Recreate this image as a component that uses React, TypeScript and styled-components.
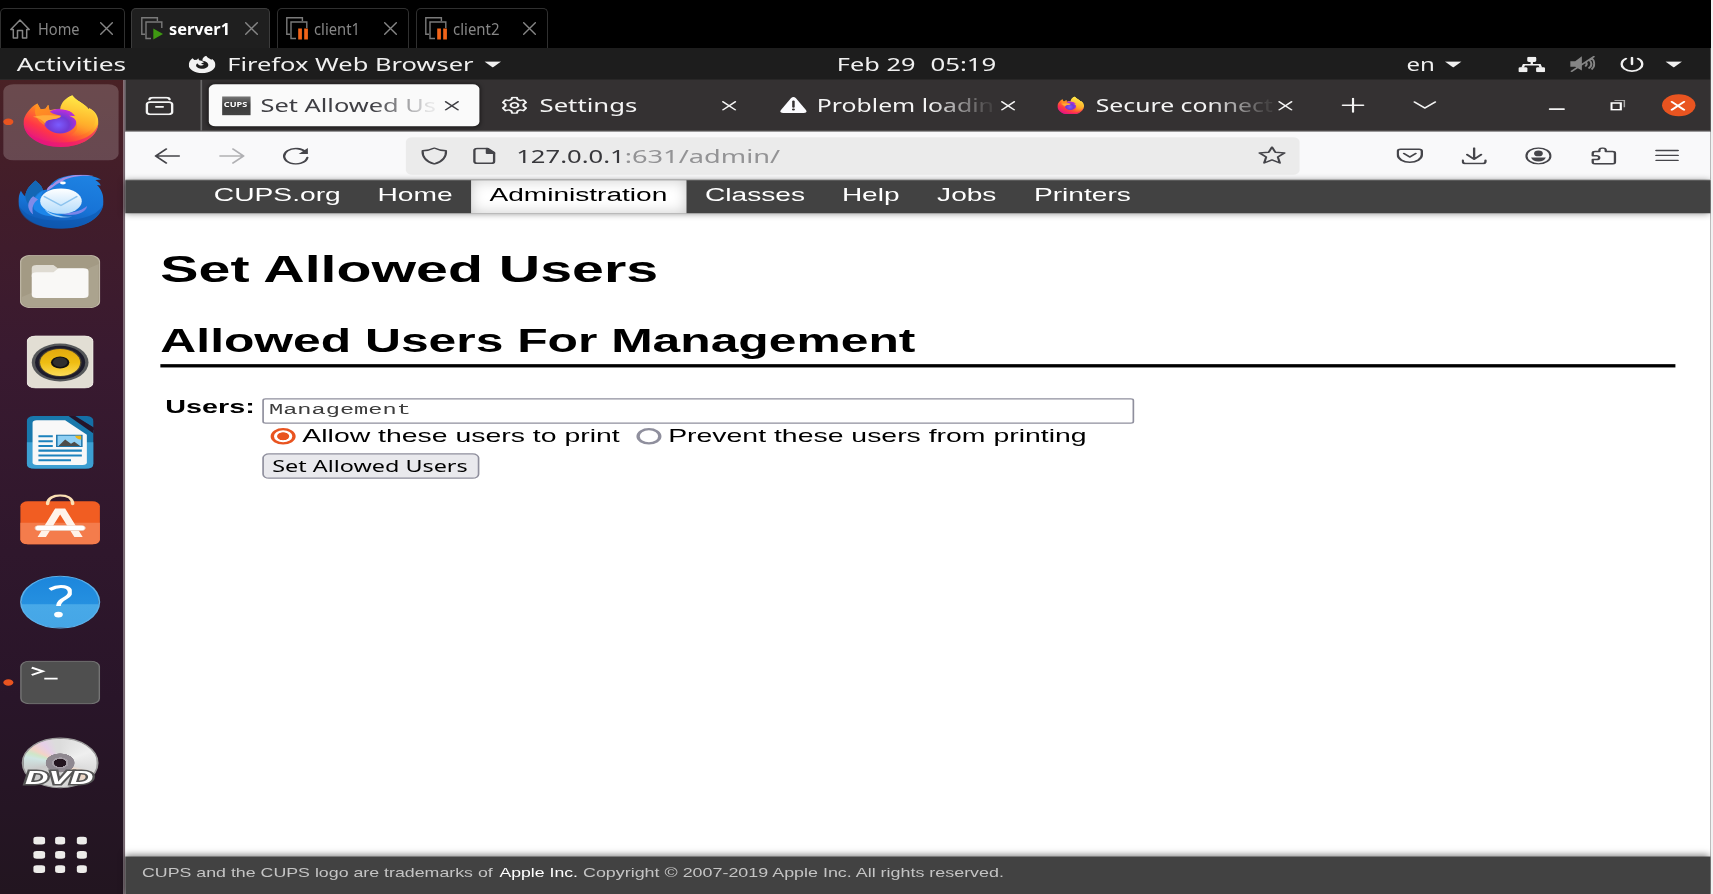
import React, { useLayoutEffect, useRef } from "react";
import styled, { createGlobalStyle } from "styled-components";

const GlobalStyle = createGlobalStyle`
  *, *::before, *::after { box-sizing: border-box; }
  html, body, #root { height: 100%; }
  body { margin: 0; background: #f1f1f1; overflow: hidden; }
  svg { display: block; flex: none; }
`;

const UI = `"Noto Sans", "Open Sans", sans-serif`;
const HELV = `"Liberation Sans", Arial, sans-serif`;

/* ---------- text fitted to a given advance width ---------- */

const FitOuter = styled.span<{ $w: number; $fade?: boolean }>`
  display: inline-block;
  flex: none;
  width: ${(p) => p.$w}px;
  white-space: nowrap;
  ${(p) => p.$fade && `mask-image: linear-gradient(to right, #000 64%, rgba(0, 0, 0, 0.1) 97%);`}
`;

const FitInner = styled.span`
  display: inline-block;
  transform-origin: 0 50%;
  white-space: pre;
`;

function Fit({ w, fade, children }: { w: number; fade?: boolean; children: React.ReactNode }) {
  const outer = useRef<HTMLSpanElement>(null);
  const inner = useRef<HTMLSpanElement>(null);
  useLayoutEffect(() => {
    if (!outer.current || !inner.current) return;
    inner.current.style.transform = "none";
    const k = outer.current.getBoundingClientRect().width / inner.current.getBoundingClientRect().width;
    inner.current.style.transform = `scaleX(${k})`;
  }, [w]);
  return (
    <FitOuter ref={outer} $w={w} $fade={fade}>
      <FitInner ref={inner}>{children}</FitInner>
    </FitOuter>
  );
}

/* ---------- host window with machine tabs ---------- */

const HostWindow = styled.div`
  width: 1711px;
  height: 894px;
  display: flex;
  flex-direction: column;
  overflow: hidden;
  background: #000;
`;

const MachineTabs = styled.div`
  height: 48px;
  flex: none;
  display: flex;
  align-items: flex-end;
  gap: 6.5px;
`;

const MachineTab = styled.div<{ $w: number; $active?: boolean; $gap?: number }>`
  width: ${(p) => p.$w}px;
  height: 40px;
  display: flex;
  align-items: center;
  padding: 0 11px 0 8.5px;
  gap: ${(p) => p.$gap ?? 4.5}px;
  border: 1px solid ${(p) => (p.$active ? "#3c3c3c" : "#303030")};
  border-bottom: 0;
  border-radius: 5px 5px 0 0;
  background: ${(p) => (p.$active ? "#1f1f1f" : "#000")};
  color: #868686;
  font: 400 15.5px/20px ${UI};
`;

const MachineName = styled.div<{ $active?: boolean }>`
  height: 20px;
  color: ${(p) => (p.$active ? "#fff" : "#868686")};
  font-weight: ${(p) => (p.$active ? 700 : 400)};
`;

const Push = styled.div`
  flex: 1;
`;

const GuestViewport = styled.div`
  flex: 1;
  overflow: hidden;
`;

const GuestScreen = styled.div`
  width: 1024px;
  height: 768px;
  transform: scale(1.6704, 1.10156);
  transform-origin: 0 0;
  display: flex;
  flex-direction: column;
  background: #fff;
`;

/* ---------- desktop shell ---------- */

const TopBar = styled.div`
  height: 29px;
  flex: none;
  display: grid;
  grid-template-columns: 501px 1fr auto;
  align-items: center;
  padding: 0 17px 0 0;
  background: #1d1d1d;
  color: #f0f0f0;
  font: 400 16px/22px ${UI};
`;

const TopLeft = styled.div`
  display: flex;
  align-items: center;
  padding-left: 10px;
`;

const AppMenu = styled.div`
  display: flex;
  align-items: center;
  gap: 7px;
  margin-left: 37px;
`;

const Clock = styled.div`
  display: flex;
  gap: 9px;
`;

const Status = styled.div`
  display: flex;
  align-items: center;
`;

const StatusItem = styled.div<{ $ml: number }>`
  margin-left: ${(p) => p.$ml}px;
  color: #f0f0f0;
`;

const Workspace = styled.div`
  flex: 1;
  display: flex;
  min-height: 0;
`;

const DockBar = styled.div`
  width: 75px;
  flex: none;
  display: flex;
  flex-direction: column;
  padding-top: 2px;
  border-right: 1px solid #76666f;
  background: linear-gradient(180deg, #492125 0%, #421d2a 14%, #391a30 34%, #2f172c 58%, #291529 76%, #221520 100%);
`;

const DockItem = styled.div`
  height: 72.75px;
  flex: none;
  display: flex;
  align-items: center;
`;

const DockTile = styled.div<{ $focused?: boolean }>`
  position: relative;
  width: 69px;
  height: 69px;
  margin-left: 1.5px;
  padding: 0 0 1.5px;
  border-radius: 6px;
  display: flex;
  align-items: center;
  justify-content: center;
  background: ${(p) => (p.$focused ? "rgba(255, 255, 255, 0.19)" : "transparent")};
`;

const RunningDot = styled.span`
  position: absolute;
  left: 0;
  top: 31px;
  width: 6px;
  height: 6px;
  border-radius: 50%;
  background: #e95420;
`;

const AppsButton = styled.div`
  display: grid;
  grid-template-columns: repeat(3, 6.5px);
  grid-auto-rows: 6.5px;
  gap: 6.4px;
  margin: 30.5px 0 0 20px;
`;

const AppsDot = styled.span`
  border-radius: 2px;
  background: #edecea;
`;

/* ---------- browser chrome ---------- */

const Browser = styled.div`
  flex: 1;
  min-width: 0;
  display: flex;
  flex-direction: column;
`;

const TabStrip = styled.div`
  height: 47px;
  flex: none;
  display: flex;
  align-items: center;
  background: #343132;
  border-bottom: 1px solid #777576;
  color: #f4f4f4;
`;

const ViewButton = styled.div`
  width: 45.5px;
  height: 46px;
  padding-left: 12px;
  display: flex;
  align-items: center;
  border-right: 1px solid #6b696a;
`;

const TabList = styled.div`
  display: flex;
  gap: 4px;
  margin-left: 4px;
`;

const BrowserTab = styled.div<{ $active?: boolean }>`
  width: 162.5px;
  height: 38px;
  padding: 0 12.5px 0 ${(p) => (p.$active ? 8 : 9)}px;
  display: flex;
  align-items: center;
  border-radius: 4px;
  background: ${(p) => (p.$active ? "#fafafa" : "transparent")};
  box-shadow: ${(p) => (p.$active ? "0 0 3px rgba(0, 0, 0, 0.6)" : "none")};
  color: ${(p) => (p.$active ? "#3f3f44" : "#f4f4f4")};
  font: 400 16px/24px ${UI};
`;

const TabLabel = styled.div`
  flex: 1;
  margin-left: 6.7px;
  height: 24px;
`;

const Favicon = styled.div`
  width: 17px;
  height: 17px;
  display: flex;
  align-items: center;
  justify-content: center;
  background: linear-gradient(#777 0%, #3c3c3c 45%, #444 100%);
  color: #fff;
  font: 700 6px/8px ${UI};
`;

const StripTools = styled.div`
  flex: 1;
  display: flex;
  align-items: center;
  padding-left: 16px;
`;

const StripTool = styled.div<{ $ml: number }>`
  margin-left: ${(p) => p.$ml}px;
`;

const CloseCircle = styled.div`
  width: 20px;
  height: 20px;
  border-radius: 50%;
  display: flex;
  align-items: center;
  justify-content: center;
  background: #e95420;
  color: #fff;
`;

const NavBar = styled.div`
  height: 44px;
  flex: none;
  display: flex;
  align-items: center;
  padding: 0 18px 0 17px;
  background: #f9f9fa;
  border-bottom: 1px solid #cccccc;
  color: #45454a;
`;

const NavButtons = styled.div`
  display: flex;
  gap: 22.6px;
`;

const Dimmed = styled.div`
  opacity: 0.4;
`;

const UrlBar = styled.div`
  width: 535px;
  height: 34px;
  margin-left: 58px;
  padding: 0 8.5px 0 9px;
  display: flex;
  align-items: center;
  border-radius: 4px;
  background: #ebebeb;
`;

const PageInfo = styled.div`
  margin-left: 14.7px;
`;

const UrlText = styled.div`
  flex: 1;
  margin-left: 12px;
  display: flex;
  color: #38383c;
  font: 400 16.5px/24px ${UI};
`;

const UrlPath = styled.span`
  color: #939395;
`;

const NavTools = styled.div`
  flex: 1;
  display: flex;
  justify-content: flex-end;
  gap: 22.5px;
`;

/* ---------- CUPS page ---------- */

const Page = styled.div`
  flex: 1;
  display: flex;
  flex-direction: column;
  background: #fff;
  font-family: ${HELV};
  color: #000;
`;

const PageNav = styled.nav`
  height: 30px;
  flex: none;
  display: flex;
  padding-left: 41.8px;
  background: #424242;
  box-shadow: 0 1px 5px rgba(0, 0, 0, 0.5);
`;

const PageNavItem = styled.div<{ $active?: boolean }>`
  height: 30px;
  padding: 0 11.1px;
  font-size: 16px;
  line-height: 28px;
  color: ${(p) => (p.$active ? "#000" : "#fff")};
  background: ${(p) => (p.$active ? "#fff" : "transparent")};
  box-shadow: ${(p) => (p.$active ? "inset 0 0 10px rgba(0, 0, 0, 0.22)" : "none")};
`;

const Content = styled.main`
  flex: 1;
  padding: 31px 21px 0;
`;

const Title = styled.h1`
  margin: 0;
  font-size: 34px;
  line-height: 39px;
`;

const SectionTitle = styled.h2`
  margin: 28.5px 0 28.5px;
  padding: 0 0 4px;
  font-size: 30px;
  line-height: 34px;
  border-bottom: 3px solid #000;
`;

const Form = styled.div`
  display: flex;
  padding-left: 3px;
  font-size: 16px;
`;

const FieldLabel = styled.div`
  width: 58px;
  font-weight: 700;
  line-height: 16px;
`;

const Fields = styled.div`
  display: flex;
  flex-direction: column;
  align-items: flex-start;
`;

const TextField = styled.div`
  width: 522px;
  height: 23px;
  padding-left: 3px;
  border: 1px solid #8f8f9d;
  border-radius: 2px;
  color: #3d3d3d;
  font: 400 14px/18px "Liberation Mono", monospace;
`;

const RadioRow = styled.div`
  height: 18px;
  margin: 3px 0 6px 5px;
  display: flex;
  align-items: center;
`;

const RadioMark = styled.span<{ $checked?: boolean; $ml?: number }>`
  width: 15px;
  height: 15px;
  margin: 0 3.5px 1.5px ${(p) => p.$ml ?? 0}px;
  border-radius: 50%;
  border: 2px solid ${(p) => (p.$checked ? "#e95420" : "#8f8f9d")};
  background: ${(p) => (p.$checked ? "radial-gradient(circle, #e95420 0 3.3px, #fff 3.9px)" : "#fff")};
`;

const SubmitButton = styled.div`
  width: 130px;
  height: 23px;
  padding-left: 5px;
  border: 1px solid #8f8f9d;
  border-radius: 4px;
  background: #e9e9ed;
  font: 400 14.5px/21px ${UI};
`;

const Footer = styled.footer`
  height: 34px;
  flex: none;
  padding-left: 10px;
  display: flex;
  gap: 3.5px;
  background: #424242;
  box-shadow: 0 -1px 5px rgba(0, 0, 0, 0.5);
  color: #c4c4c4;
  font-size: 11px;
  line-height: 31px;
`;

const FooterLink = styled.span`
  color: #fff;
`;

/* ---------- line icons ---------- */

const Line = ({
  d,
  s = 16,
  sw = 1.3,
  h,
  children,
}: {
  d?: string;
  s?: number;
  sw?: number;
  h?: number;
  children?: React.ReactNode;
}) => (
  <svg
    width={s}
    height={h ?? s}
    viewBox={`0 0 ${s} ${h ?? s}`}
    fill="none"
    stroke="currentColor"
    strokeWidth={sw}
    strokeLinecap="round"
    strokeLinejoin="round"
  >
    {d && <path d={d} />}
    {children}
  </svg>
);

const HostClose = () => <Line s={13} sw={1.4} d="M.7.7 12.3 12.3M12.3.7.7 12.3" />;
const CloseX = () => <Line s={9} sw={1.15} d="M.8.8 8.2 8.2M8.2.8.8 8.2" />;
const Caret = () => (
  <svg width="10" height="6" viewBox="0 0 10 6">
    <path d="M0 .3h10L5 5.8z" fill="#f0f0f0" />
  </svg>
);

const MachineIcon = ({ running }: { running?: boolean }) => (
  <svg width="23" height="23" viewBox="0 0 23 23" fill="none" stroke="#7a7a7a" strokeWidth="1.4">
    <path d="M4 17.300H.8V.8h15.600V4" />
    <path d="M10 21.500H5V5h15.800v6" />
    {running ? (
      <path d="M12.300 11.500v11l9.700-5.500z" fill="#3f9a12" stroke="none" />
    ) : (
      <path d="M12.200 11.500h3.700v11h-3.700zM18.200 11.500h3.700v11h-3.700z" fill="#f26419" stroke="none" />
    )}
  </svg>
);

const FirefoxGlyph = () => (
  <svg width="16" height="16" viewBox="0 0 16 16">
    <path
      d="M2.200 2.200 3.400 4l1.500-.3.800-1.400.5 1.900 2 .5C8 2.500 9 .8 10.500.1c.4 1.700 1.900 2.300 3 3.600l.5-.8c1.300 1.500 2 3.500 2 5.400C16 12.600 12.400 16 8 16S0 12.600 0 8.500C0 6 .8 3.700 2.200 2.200z"
      fill="#f2f2f2"
    />
    <path
      d="M7.600 4.500c1.900 0 3.900 1.200 4.100 3.600.2 2-1.500 3.700-3.600 3.700-2 0-3.700-1.300-3.700-3 0-.8.300-1.400.8-1.900.1 1 .8 1.500 1.500 1.900 1 .2 2-.2 2.300-.9-.9-.2-1.500-.6-1.500-1.100.8-.1 1.400-.4 1.600-1-.5-.6-1-.9-1.500-1.300z"
      fill="#1d1d1d"
    />
  </svg>
);

const Firefox = ({ size, id }: { size: number; id: string }) => (
  <svg width={size} height={size * 1.04} viewBox="0 0 46 48">
    <defs>
      <linearGradient id={id + "a"} x1="0.85" y1="0.1" x2="0.25" y2="0.95">
        <stop offset="0" stopColor="#fff44f" />
        <stop offset="0.3" stopColor="#ffc02e" />
        <stop offset="0.52" stopColor="#ff7a27" />
        <stop offset="0.76" stopColor="#ff3647" />
        <stop offset="1" stopColor="#e31587" />
      </linearGradient>
      <radialGradient id={id + "b"} cx="0.45" cy="0.65" r="0.6">
        <stop offset="0" stopColor="#7a5cff" />
        <stop offset="0.55" stopColor="#7139d4" />
        <stop offset="1" stopColor="#b82fd9" />
      </radialGradient>
      <linearGradient id={id + "c"} x1="0.6" y1="0" x2="0.4" y2="1">
        <stop offset="0" stopColor="#fff04a" />
        <stop offset="0.6" stopColor="#ffb42c" />
        <stop offset="1" stopColor="#ff8b2a" stopOpacity="0" />
      </linearGradient>
      <linearGradient id={id + "d"} x1="0" y1="0" x2="0.6" y2="1">
        <stop offset="0" stopColor="#ff981e" />
        <stop offset="1" stopColor="#ff7a2b" />
      </linearGradient>
    </defs>
    <path
      d="M8.500 7.500l2 5.500 3-.600 1.700-3.600.8 5C19 12.800 23 12.500 24.500 13 24 7 26.500 2 30 0c1.500 4.500 8 8 10 13l.5-1C44 14.500 46 19.500 46 25c0 13-10 23-23 23S0 38.500 0 25C0 19 4 11 8.500 7.500z"
      fill={`url(#${id}a)`}
    />
    <path d="M0 25c1 11 10 19 23 19s22-8 23-19c0 13-10 23-23 23S0 38 0 25z" fill="#e8157a" opacity="0.6" />
    <ellipse cx="22.500" cy="24" rx="10" ry="11.500" fill={`url(#${id}b)`} />
    <path
      d="M22.500 13C23 6 26.500 2 30 0c1.500 4.500 8 8 10 13l.5-1C44 15 45 20 44 25c-2 9-8 14-18 14 6-3 8-8 6.500-14-.5-3-2-4.500-4.500-6l5 .5c-2-4-6-6-10.500-6.500z"
      fill={`url(#${id}c)`}
    />
    <path
      d="M8.500 7.500l2 5.500 3-.600 1.700-3.600.8 6.200c2 2.500 4.500 3.200 7 3.700-1 3-5 3.500-7.500 4-2 .5-3 1.500-2.500 5C10 25 4.500 18 8.500 7.500z"
      fill={`url(#${id}d)`}
    />
    <path d="M5.800 20c4-2 12-1.800 17.200-.5-1 2.500-5 2.500-7.500 3.500-1.500.6-2.200 2-2.200 3.500-1.300-3.500-4-5.500-7.500-6.500z" fill="#ffab3a" />
  </svg>
);

const Thunderbird = () => (
  <svg width="51" height="49" viewBox="0 0 52 50">
    <defs>
      <linearGradient id="tbBody" x1="0.7" y1="0" x2="0.4" y2="1">
        <stop offset="0" stopColor="#1e82e2" />
        <stop offset="0.6" stopColor="#1773d6" />
        <stop offset="1" stopColor="#0f56b0" />
      </linearGradient>
      <linearGradient id="tbMail" x1="0" y1="0" x2="0" y2="1">
        <stop offset="0" stopColor="#fff" />
        <stop offset="1" stopColor="#b4dcfb" />
      </linearGradient>
    </defs>
    <path
      d="M1.500 15c1 2.500 1.500 4 2.700 5C4.500 14 7.500 9 10.500 5.500c2 3 4 5 4.500 9l3-1C20 5 27 0 38 0c5 0 9 1.500 12.500 4.500l-3.500.5c1.500 1.500 2.800 3 3.300 5l-2.300-.5C51 14 52 19 52 25c0 14-11 25-26 25S0 39 0 25c0-4 .5-7 1.500-10z"
      fill="url(#tbBody)"
    />
    <path d="M4.200 20C4.500 14 7.500 9 10.500 5.500c2 3 4 5 4.500 9C10 18 8 24 9 32c-3-3-4.500-8-4.800-12z" fill="#1467b5" />
    <path d="M17.500 15c-.3-3 1-4.500 3.500-6 3-5 8.500-8.500 17-9 3 0 6 .3 8 1.200-9-1-17 1.300-20 6-3 1-5 5-8.500 7.800z" fill="#a68fe4" />
    <path d="M15 15c-4 12 4 22 13 22-5 3-14 2-18.500-5-1.500-7 1-13 5.500-17z" fill="#1c86ea" />
    <path d="M9 20c-4 5-4 12 0 17-1-6 0-11 3-14z" fill="#7f8be8" />
    <path d="M42 29c-4 5-10 7-17 7 7 3 16 1 17-7z" fill="#7a85e8" />
    <path d="M16 32c4 5 9 7 17 7-7 2-14 0-17-7z" fill="#9fd0f8" />
    <ellipse cx="26" cy="24.500" rx="12.700" ry="11.800" fill="url(#tbMail)" />
    <path d="M15.500 20 26 28.500 36 20" fill="none" stroke="#8cc3ee" strokeWidth="1.200" />
    <ellipse cx="27.200" cy="7.700" rx="1.800" ry="1.300" fill="#fff" />
    <path d="M0 28c4 11 14 14.500 26 14.500S49 38 52 27c-1 13-12 23-26 23S1 42 0 28z" fill="#0d57ad" opacity="0.6" />
  </svg>
);

const Files = () => (
  <svg width="48" height="48" viewBox="0 0 48 48">
    <rect x="0.300" y="0.300" width="47.400" height="47.400" rx="6" fill="#a39a84" stroke="#c2bba9" strokeWidth="0.800" />
    <path d="M1 38 47 8v33q0 6-6 6H7q-6 0-6-6z" fill="#b3ab98" opacity="0.500" />
    <path d="M7 20V12q0-3 3-3h10l3 3.500h15v8z" fill="#dfdbd2" />
    <path d="M7 18q0-2.500 3-2.500h10l3-3.500h15q3 0 3 3v21q0 3-3 3H10q-3 0-3-3z" fill="#f9f8f6" />
  </svg>
);

const Rhythmbox = () => (
  <svg width="40" height="48" viewBox="0 0 40 48">
    <defs>
      <linearGradient id="rbCone" x1="0" y1="0" x2="0" y2="1">
        <stop offset="0" stopColor="#e2a90e" />
        <stop offset="0.500" stopColor="#efbd12" />
        <stop offset="1" stopColor="#fbdc58" />
      </linearGradient>
    </defs>
    <rect x="0.300" y="0.300" width="39.400" height="47.400" rx="5" fill="#e2ded4" stroke="#f2efe8" strokeWidth="0.600" />
    <ellipse cx="20" cy="24.500" rx="17" ry="17.200" fill="#56585a" />
    <ellipse cx="20" cy="24.500" rx="15" ry="15.300" fill="#1d1c2b" />
    <ellipse cx="20" cy="24.500" rx="12.800" ry="13" fill="#4e4530" />
    <ellipse cx="20" cy="24.500" rx="12" ry="12.300" fill="url(#rbCone)" />
    <ellipse cx="20" cy="24.500" rx="5.500" ry="5.500" fill="#111" />
    <ellipse cx="20" cy="24.300" rx="4.300" ry="4.300" fill="#2f2f2f" />
  </svg>
);

const Writer = () => (
  <svg width="40" height="48" viewBox="0 0 40 48">
    <path d="M5 0h22.500L40 13v30q0 5-5 5H5q-5 0-5-5V5q0-5 5-5z" fill="#1878ac" />
    <path d="M0 24h40v19q0 5-5 5H5q-5 0-5-5z" fill="#3d9fd2" />
    <path d="M6 4h17l13 13v25q0 2.500-2.500 2.500H6q-2.500 0-2.500-2.500V6.500Q3.500 4 6 4z" fill="#f8f8f8" />
    <path d="M29 0h6q5 0 5 5v5.500z" fill="#146fa6" />
    <path d="M25 0h3.500L40 10.500V16z" fill="#24152a" />
    <path d="M7 18.500h8.600M7 23h8.600M7 27.300h8.600M7 31.500h26M7 36h26M7 40.300h19.500" stroke="#1c82bd" strokeWidth="1.900" />
    <path d="M18 17.500h15v10.300H18z" fill="#8fd0f4" stroke="#1c75ac" strokeWidth="0.900" />
    <path d="M19 27.300l4-6 3.500 4 2-1.800 3.500 3.800z" fill="#4d4c4a" />
    <path d="M29 18h3.600v3.500c-2 0-3.300-1.300-3.600-3.500z" fill="#edb512" />
  </svg>
);

const SoftwareCenter = () => (
  <svg width="48" height="51" viewBox="0 0 48 51">
    <rect x="0.200" y="6.500" width="47.600" height="39" rx="4.500" fill="#f15d22" />
    <path d="M.2 26h47.600v15q0 4.500-4.500 4.500H4.700Q.2 45.500.2 41z" fill="#f47c4c" />
    <path d="M16.500 9c0-6 4-7.800 7.500-7.800s7.500 1.800 7.500 7.800" fill="none" stroke="#fbe0b4" strokeWidth="2.100" strokeLinecap="round" />
    <path d="M21 13h6l10.500 26h-5L24 18.500 15.500 39h-5z" fill="#fff3ea" />
    <rect x="9" y="28.500" width="30" height="4.600" rx="2.300" fill="#fff" stroke="#e9c9b8" strokeWidth="0.600" />
  </svg>
);

const HelpDisc = styled.div`
  width: 48px;
  height: 48px;
  border-radius: 50%;
  border: 1px solid #5ab0ea;
  background: linear-gradient(#1c86dc 0%, #2590e0 54%, #48a9e8 55%, #45a6e6 100%);
  display: flex;
  align-items: center;
  justify-content: center;
`;

const HelpIcon = () => (
  <HelpDisc>
    <svg width="14" height="32" viewBox="0 0 14 32" fill="none">
      <path d="M.8 4.500C7.500-.5 13 2.200 13 7.200c0 5.500-7 5.500-7 12.300" stroke="#fff" strokeWidth="2.800" />
      <ellipse cx="6" cy="27.300" rx="2.600" ry="2.600" fill="#fff" />
    </svg>
  </HelpDisc>
);

const Terminal = () => (
  <svg width="48" height="40" viewBox="0 0 48 40">
    <rect x="0.500" y="0.800" width="47" height="38.400" rx="5" fill="#4f4f4f" stroke="#747474" strokeWidth="0.900" />
    <path d="M7 6.500 13.500 9.800 7 13.200" stroke="#fff" strokeWidth="1.700" fill="none" />
    <path d="M14.500 16.500h8" stroke="#fff" strokeWidth="1.600" />
  </svg>
);

const Disc = styled.div`
  position: relative;
  width: 46px;
  height: 46px;
  border-radius: 50%;
  border: 1px solid #9c9c9c;
  background:
    radial-gradient(circle, #24151f 0 3.600px, #a39ca4 3.800px 5px, #8f8890 5px 8.500px, transparent 8.800px),
    conic-gradient(#dcdcdc 0deg, #efefef 60deg, #dcdcdc 110deg, #f4d9c4 125deg, #dadada 160deg, #c9c9c9 250deg, #d0e6e4 285deg, #cfe6c8 297deg, #f3d3c6 308deg, #e6cfe8 330deg, #dcdcdc 350deg);
`;

const DiscLabel = styled.div`
  position: absolute;
  left: 1px;
  top: 27px;
  font: italic 700 16px/18px ${HELV};
  color: #fff;
  -webkit-text-stroke: 2.500px #555;
  paint-order: stroke fill;
`;

const Dvd = () => (
  <Disc>
    <DiscLabel>
      <Fit w={41}>DVD</Fit>
    </DiscLabel>
  </Disc>
);

/* ---------- data ---------- */

const dockApps: { icon: React.ReactNode; focused?: boolean; running?: boolean }[] = [
  { icon: <Firefox size={45} id="fxDock" />, focused: true, running: true },
  { icon: <Thunderbird /> },
  { icon: <Files /> },
  { icon: <Rhythmbox /> },
  { icon: <Writer /> },
  { icon: <SoftwareCenter /> },
  { icon: <HelpIcon /> },
  { icon: <Terminal />, running: true },
  { icon: <Dvd /> },
];

const navItems: [string, number, boolean?][] = [
  ["CUPS.org", 76],
  ["Home", 45],
  ["Administration", 106.5, true],
  ["Classes", 60],
  ["Help", 34.5],
  ["Jobs", 35.5],
  ["Printers", 58],
];

const Gear = () => (
  <Line s={16} sw={1.3}>
    <path d="M6.600.9h2.800l.5 2 1.500.9 2-.7 1.500 2.400-1.500 1.600v1.800l1.500 1.600-1.500 2.400-2-.7-1.500.9-.5 2H6.600l-.5-2-1.500-.9-2 .7-1.500-2.400 1.500-1.600V7.100L1.100 5.500l1.500-2.400 2 .7 1.500-.9z" />
    <circle cx="8" cy="8" r="2.300" />
  </Line>
);

const Warning = () => (
  <svg width="16" height="16" viewBox="0 0 16 16">
    <path d="M6.600 1.400q1.400-1.900 2.800 0l6.200 11q.9 2.300-1.300 2.600H1.700q-2.200-.3-1.300-2.600z" fill="#fbfbfe" />
    <path d="M8 4.500v5" stroke="#343132" strokeWidth="1.500" strokeLinecap="round" />
    <circle cx="8" cy="11.900" r="0.900" fill="#343132" />
  </svg>
);

export default function App() {
  return (
    <>
      <GlobalStyle />
      <HostWindow>
        <MachineTabs>
          <MachineTab $w={124.5} $gap={8.5}>
            <Line s={20} sw={1.5} d="M.8 10.500 10 1l9.200 9.500h-2.500V19h-4.200v-7.500h-5V19H3.300v-8.500z" />
            <MachineName>
              <Fit w={41.5}>Home</Fit>
            </MachineName>
            <Push />
            <HostClose />
          </MachineTab>
          <MachineTab $w={139} $active $gap={5}>
            <MachineIcon running />
            <MachineName $active>
              <Fit w={61}>server1</Fit>
            </MachineName>
            <Push />
            <HostClose />
          </MachineTab>
          <MachineTab $w={132.5}>
            <MachineIcon />
            <MachineName>
              <Fit w={46}>client1</Fit>
            </MachineName>
            <Push />
            <HostClose />
          </MachineTab>
          <MachineTab $w={132.5}>
            <MachineIcon />
            <MachineName>
              <Fit w={46.5}>client2</Fit>
            </MachineName>
            <Push />
            <HostClose />
          </MachineTab>
        </MachineTabs>
        <GuestViewport>
          <GuestScreen>
            <TopBar>
              <TopLeft>
                <Fit w={65.5}>Activities</Fit>
                <AppMenu>
                  <FirefoxGlyph />
                  <Fit w={147.5}>Firefox Web Browser</Fit>
                  <Caret />
                </AppMenu>
              </TopLeft>
              <Clock>
                <Fit w={47}>Feb 29</Fit>
                <Fit w={39.5}>05:19</Fit>
              </Clock>
              <Status>
                <Fit w={17}>en</Fit>
                <StatusItem $ml={6}>
                  <Caret />
                </StatusItem>
                <StatusItem $ml={34}>
                  <svg width="16" height="14" viewBox="0 0 16 14" fill="#f0f0f0">
                    <rect x="5.300" y="0" width="5.400" height="4.600" rx="1" />
                    <rect x="0" y="9.500" width="5.400" height="4.500" rx="1" />
                    <rect x="10.600" y="9.500" width="5.400" height="4.500" rx="1" />
                    <path d="M7.300 4h1.400v2.600h4.600l1 3.400h-1.600l-.6-2H3.900l-.6 2H1.700l1-3.400h4.600z" />
                  </svg>
                </StatusItem>
                <StatusItem $ml={15}>
                  <svg width="15" height="15" viewBox="0 0 15 15" fill="none" stroke="#858585" strokeWidth="1.300">
                    <path d="M0 5h3l4-4.500v13L3 10H0z" fill="#858585" stroke="none" />
                    <path d="M9 5.500c1.200 1.200 1.200 3 0 4.200M11 3.500c2.300 2.300 2.300 6 0 8.200M12.800 2c2.300 3 2.200 7.800 0 10.500M.5 14.500 14.500.5" />
                  </svg>
                </StatusItem>
                <StatusItem $ml={15}>
                  <Line s={14} sw={1.500} d="M3.400 1.700a6.200 6.200 0 1 0 7.200 0M7 .8v6" />
                </StatusItem>
                <StatusItem $ml={13}>
                  <Caret />
                </StatusItem>
              </Status>
            </TopBar>
            <Workspace>
              <DockBar>
                {dockApps.map((app, i) => (
                  <DockItem key={i}>
                    <DockTile $focused={app.focused}>
                      {app.icon}
                      {app.running && <RunningDot />}
                    </DockTile>
                  </DockItem>
                ))}
                <AppsButton>
                  {Array.from({ length: 9 }, (_, i) => (
                    <AppsDot key={i} />
                  ))}
                </AppsButton>
              </DockBar>
              <Browser>
                <TabStrip>
                  <ViewButton>
                    <Line s={17} sw={1.500}>
                      <rect x="0.900" y="5.200" width="15.200" height="11" rx="2" />
                      <path d="M2.500 2.600Q2.800 1 4.500 1h8q1.700 0 2 1.600M6.500 9.500h4" />
                    </Line>
                  </ViewButton>
                  <TabList>
                    <BrowserTab $active>
                      <Favicon>
                        <Fit w={14}>CUPS</Fit>
                      </Favicon>
                      <TabLabel>
                        <Fit w={105} fade>
                          Set Allowed Us
                        </Fit>
                      </TabLabel>
                      <CloseX />
                    </BrowserTab>
                    <BrowserTab>
                      <Gear />
                      <TabLabel>
                        <Fit w={58.5}>Settings</Fit>
                      </TabLabel>
                      <CloseX />
                    </BrowserTab>
                    <BrowserTab>
                      <Warning />
                      <TabLabel>
                        <Fit w={106} fade>
                          Problem loadin
                        </Fit>
                      </TabLabel>
                      <CloseX />
                    </BrowserTab>
                    <BrowserTab>
                      <Firefox size={16} id="fxTab" />
                      <TabLabel>
                        <Fit w={106} fade>
                          Secure connect
                        </Fit>
                      </TabLabel>
                      <CloseX />
                    </BrowserTab>
                  </TabList>
                  <StripTools>
                    <Line s={14} sw={1.300} d="M7 .8v12.400M.8 7h12.400" />
                    <StripTool $ml={29}>
                      <Line s={14} h={10} sw={1.300} d="M.8 2 7 7.500 13.200 2" />
                    </StripTool>
                    <StripTool $ml={67}>
                      <Line s={10} h={9} sw={1.400} d="M.8 7.500h8.400" />
                    </StripTool>
                    <StripTool $ml={27}>
                      <svg width="9" height="10" viewBox="0 0 9 10" fill="none">
                        <path d="M2.500.7h6v6" stroke="#a9a8a8" strokeWidth="1" />
                        <path d="M.7 3h5.600v6H.7z" stroke="#fff" strokeWidth="1.300" />
                      </svg>
                    </StripTool>
                    <StripTool $ml={22}>
                      <CloseCircle>
                        <Line s={9} sw={1.500} d="M.8.8 8.200 8.200M8.200.8.8 8.200" />
                      </CloseCircle>
                    </StripTool>
                  </StripTools>
                </TabStrip>
                <NavBar>
                  <NavButtons>
                    <Line d="M15.200 8H1.200M7.500 1.700 1.200 8l6.300 6.300" />
                    <Dimmed>
                      <Line d="M.8 8h14M8.500 1.700 14.800 8l-6.300 6.300" />
                    </Dimmed>
                    <Line sw={1.400}>
                      <path d="M14.300 5A7 7 0 1 0 15 9.500" />
                      <path d="M15.300.8v5.400H9.800z" fill="currentColor" stroke="none" />
                    </Line>
                  </NavButtons>
                  <UrlBar>
                    <Line d="M8 .8c2 1.600 4.500 2.300 7 2.400C15.300 9 13 13 8 15.300 3 13 .7 9 1 3.200 3.500 3.100 6 2.400 8 .8z" />
                    <PageInfo>
                      <Line s={14} h={16} sw={1.400}>
                        <path d="M2.700 1.200H9l3.800 3.800v8q0 1.700-1.700 1.700H2.700Q1 14.700 1 13V2.900q0-1.700 1.700-1.700z" />
                        <path d="M8.500 1.200v4.300h4.300z" fill="currentColor" />
                      </Line>
                    </PageInfo>
                    <UrlText>
                      <Fit w={65}>127.0.0.1</Fit>
                      <UrlPath>
                        <Fit w={93}>:631/admin/</Fit>
                      </UrlPath>
                    </UrlText>
                    <Line s={17} sw={1.300} d="M8.500 1l2 4.700 5.500.5-4 3.800 1.200 5.400-4.700-2.800-4.700 2.800L5 10 1 6.200l5.500-.5z" />
                  </UrlBar>
                  <NavTools>
                    <Line sw={1.400} d="M2.500 2h11q1.700 0 1.700 1.700V7A7.200 6.800 0 0 1 .8 7V3.700Q.8 2 2.500 2zM4.500 5.800 8 9l3.500-3.200" />
                    <Line sw={1.400} d="M7.500.8v10M3.300 6.800 7.500 11l4.200-4.200M.7 12v1q0 1.900 1.900 1.900h9.800q1.900 0 1.900-1.900v-1" />
                    <Line sw={1.300}>
                      <circle cx="8" cy="8" r="7.200" />
                      <circle cx="8" cy="5.700" r="2.600" fill="currentColor" stroke="none" />
                      <path d="M3.600 9.300h8.800Q11.500 13 8 13T3.600 9.300z" fill="currentColor" stroke="none" />
                    </Line>
                    <Line sw={1.400} d="M5.500 4V2.700a1.900 1.900 0 0 1 3.800 0V4h4q1.500 0 1.500 1.500v8.200q0 1.500-1.500 1.500H3q-1.500 0-1.500-1.500v-2.400h2.200a1.700 1.700 0 0 0 0-3.400H1.500V5.500Q1.500 4 3 4z" />
                    <Line sw={1.300} d="M1.500 3h13M1.500 7.500h13M1.500 12h13" />
                  </NavTools>
                </NavBar>
                <Page>
                  <PageNav>
                    {navItems.map(([label, w, active]) => (
                      <PageNavItem key={label} $active={active}>
                        <Fit w={w}>{label}</Fit>
                      </PageNavItem>
                    ))}
                  </PageNav>
                  <Content>
                    <Title>
                      <Fit w={298}>Set Allowed Users</Fit>
                    </Title>
                    <SectionTitle>
                      <Fit w={452}>Allowed Users For Management</Fit>
                    </SectionTitle>
                    <Form>
                      <FieldLabel>
                        <Fit w={53.5}>Users:</Fit>
                      </FieldLabel>
                      <Fields>
                        <TextField>
                          <Fit w={85}>Management</Fit>
                        </TextField>
                        <RadioRow>
                          <RadioMark $checked />
                          <Fit w={190}>Allow these users to print</Fit>
                          <RadioMark $ml={10.7} />
                          <Fit w={250.5}>Prevent these users from printing</Fit>
                        </RadioRow>
                        <SubmitButton>
                          <Fit w={117}>Set Allowed Users</Fit>
                        </SubmitButton>
                      </Fields>
                    </Form>
                  </Content>
                  <Footer>
                    <Fit w={210}>CUPS and the CUPS logo are trademarks of</Fit>
                    <FooterLink>
                      <Fit w={47}>Apple Inc.</Fit>
                    </FooterLink>
                    <Fit w={252}>Copyright © 2007-2019 Apple Inc. All rights reserved.</Fit>
                  </Footer>
                </Page>
              </Browser>
            </Workspace>
          </GuestScreen>
        </GuestViewport>
      </HostWindow>
    </>
  );
}
